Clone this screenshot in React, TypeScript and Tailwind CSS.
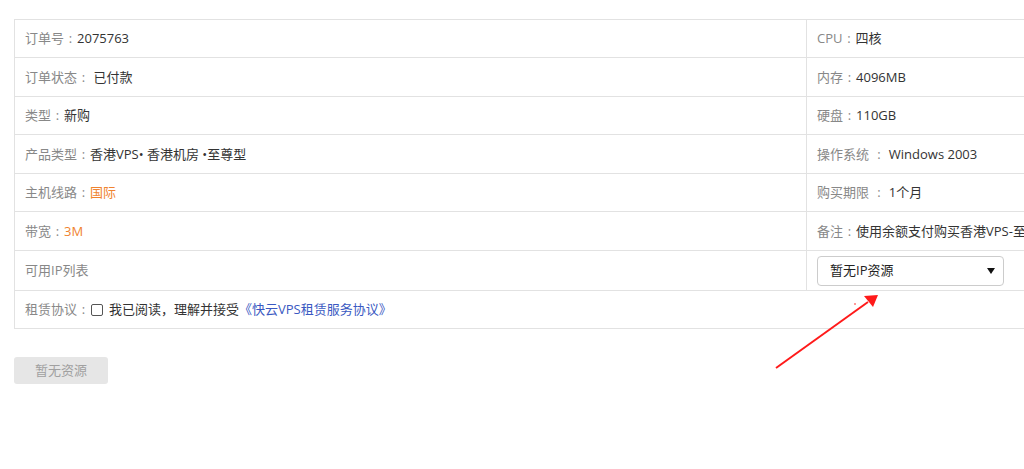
import React from "react";

const font = { fontFamily: '"Open Sans", "Noto Sans CJK SC", sans-serif' };

function C() {
  return <span className="inline-block w-[13px] text-center">:</span>;
}

function Label({ children }: { children: React.ReactNode }) {
  return <span className="text-[#888888]">{children}</span>;
}

export default function App() {
  return (
    <div className="relative w-[1024px] h-[469px] overflow-hidden bg-white text-[13px] text-[#333333]" style={font}>
      <div className="pt-[19px] pl-[14px]">
        <div className="w-[1120px] border-t border-l border-[#e2e2e2]">
          {/* Row 1 */}
          <div className="flex h-[38px] border-b border-[#e2e2e2]">
            <div className="w-[791px] flex items-center pl-[10px] leading-none">
              <Label>订单号<C /></Label>2075763
            </div>
            <div className="flex-1 border-l border-[#e2e2e2] flex items-center pl-[10px] leading-none">
              <Label>CPU<C /></Label>四核
            </div>
          </div>
          {/* Row 2 */}
          <div className="flex h-[39px] border-b border-[#e2e2e2]">
            <div className="w-[791px] flex items-center pl-[10px] leading-none">
              <Label>订单状态<C /></Label>&nbsp;已付款
            </div>
            <div className="flex-1 border-l border-[#e2e2e2] flex items-center pl-[10px] leading-none">
              <Label>内存<C /></Label>4096MB
            </div>
          </div>
          {/* Row 3 */}
          <div className="flex h-[38px] border-b border-[#e2e2e2]">
            <div className="w-[791px] flex items-center pl-[10px] leading-none">
              <Label>类型<C /></Label>新购
            </div>
            <div className="flex-1 border-l border-[#e2e2e2] flex items-center pl-[10px] leading-none">
              <Label>硬盘<C /></Label>110GB
            </div>
          </div>
          {/* Row 4 */}
          <div className="flex h-[39px] border-b border-[#e2e2e2]">
            <div className="w-[791px] flex items-center pl-[10px] leading-none whitespace-pre">
              <Label>产品类型<C /></Label>香港VPS• 香港机房 •至尊型
            </div>
            <div className="flex-1 border-l border-[#e2e2e2] flex items-center pl-[10px] leading-none whitespace-pre">
              <Label>操作系统 <C /> </Label>Windows 2003
            </div>
          </div>
          {/* Row 5 */}
          <div className="flex h-[38px] border-b border-[#e2e2e2]">
            <div className="w-[791px] flex items-center pl-[10px] leading-none">
              <Label>主机线路<C /></Label>
              <span className="text-[#f0832f]">国际</span>
            </div>
            <div className="flex-1 border-l border-[#e2e2e2] flex items-center pl-[10px] leading-none whitespace-pre">
              <Label>购买期限 <C /> </Label>1个月
            </div>
          </div>
          {/* Row 6 */}
          <div className="flex h-[39px] border-b border-[#e2e2e2]">
            <div className="w-[791px] flex items-center pl-[10px] leading-none">
              <Label>带宽<C /></Label>
              <span className="text-[#f0832f]">3M</span>
            </div>
            <div className="flex-1 border-l border-[#e2e2e2] flex items-center pl-[10px] leading-none whitespace-nowrap">
              <Label>备注<C /></Label>使用余额支付购买香港VPS-至尊型
            </div>
          </div>
          {/* Row 7 */}
          <div className="flex h-[40px] border-b border-[#e2e2e2]">
            <div className="w-[791px] flex items-center pl-[10px] leading-none">
              <Label>可用IP列表</Label>
            </div>
            <div className="flex-1 border-l border-[#e2e2e2] flex items-center pl-[10px]">
              <div className="w-[187px] h-[30px] border border-[#cccccc] rounded-[4px] flex items-center justify-between pl-[12px] pr-[8px] leading-none text-[#222]">
                <span>暂无IP资源</span>
                <svg width="8" height="6" viewBox="0 0 8 6">
                  <path d="M0 0 L8 0 L4 6 Z" fill="#111" />
                </svg>
              </div>
            </div>
          </div>
          {/* Row 8 */}
          <div className="flex h-[38px] border-b border-[#e2e2e2]">
            <div className="w-[1010px] flex items-center pl-[10px] leading-none">
              <Label>租赁协议<C /></Label>
              <span className="inline-block w-[12px] h-[12px] border border-[#555] rounded-[2px] mr-[6px] ml-[1px]" />
              <span>我已阅读，理解并接受</span>
              <span className="text-[#3a59c2]">《快云VPS租赁服务协议》</span>
            </div>
          </div>
        </div>
        <div className="mt-[28px] w-[94px] h-[27px] rounded-[3px] bg-[#e6e6e6] text-[#a0a0a0] flex items-center justify-center leading-none">
          暂无资源
        </div>
      </div>
      <svg className="absolute left-0 top-0 pointer-events-none" width="1024" height="469">
        <line x1="776" y1="368" x2="868" y2="302" stroke="#ff1a1a" strokeWidth="2" />
        <path d="M878 295 L864 296 L873 307 Z" fill="#ff1a1a" />
        <circle cx="855" cy="304" r="0.8" fill="#ff1a1a" />
      </svg>
    </div>
  );
}
